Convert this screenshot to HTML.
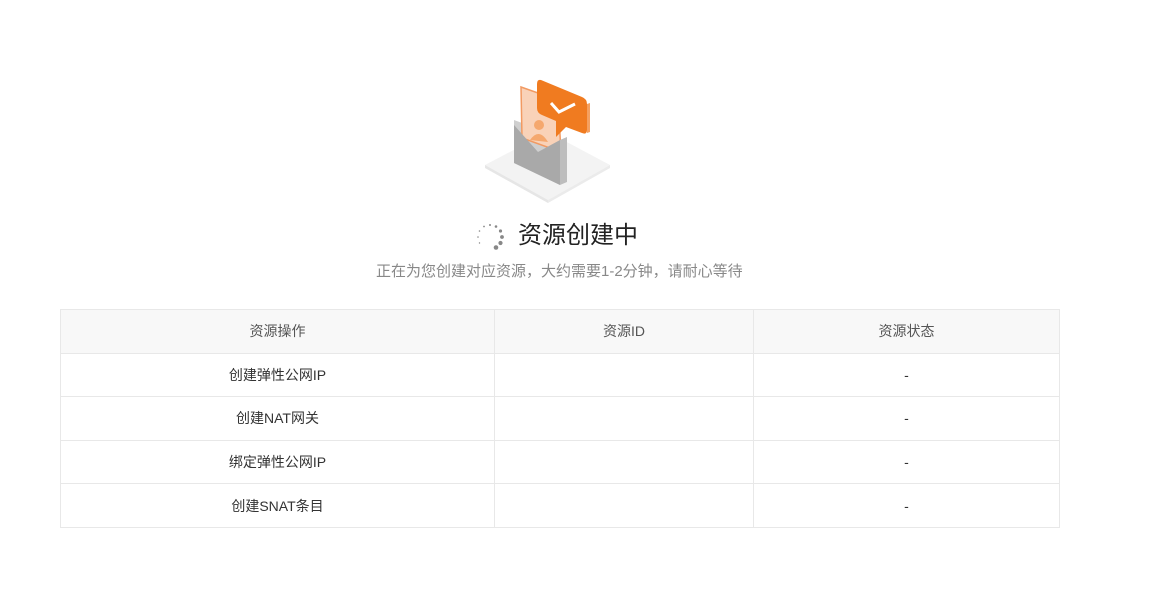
<!DOCTYPE html>
<html><head><meta charset="utf-8"><style>
*{margin:0;padding:0;box-sizing:border-box}
body{width:1167px;height:614px;background:#fff;font-family:"Liberation Sans","Noto Sans CJK SC",sans-serif;position:relative;overflow:hidden}
.title{position:absolute;top:219px;left:518px;font-size:24px;color:#222;line-height:34px;white-space:nowrap}
.sub{position:absolute;top:262px;left:376px;font-size:15px;color:#888;line-height:20px;white-space:nowrap}
table{position:absolute;left:60px;top:309px;width:1000px;border-collapse:collapse;font-size:14px;color:#333}
td,th{border:1px solid #e8e8e8;text-align:center;height:43.6px;font-weight:normal}
th{background:#f8f8f8;color:#555}
</style></head><body>
<svg style="position:absolute;left:470px;top:70px" width="160" height="140" viewBox="470 70 160 140">
<polygon points="485,165 548,132 610,165 548,200" fill="#f3f3f3"/>
<polygon points="485,165 548,200 548,203 485,168" fill="#e6e6e6"/>
<polygon points="548,200 610,165 610,168 548,203" fill="#ebebeb"/>
<polygon points="514,120 560,137 560,185 514,163" fill="#cfcfcf"/>
<polygon points="521,87 558,100 561,152 522,138" fill="#f9d2b8" stroke="#f29a62" stroke-width="1.5"/>
<circle cx="539" cy="125" r="5" fill="#f5a86e"/>
<path d="M530,140 q9,-13 18,2 z" fill="#f5a86e"/>
<polygon points="514,125 538,152 560,140 560,185 514,163" fill="#a9a9a9"/>
<polygon points="560,140 567,137 567,182 560,185" fill="#bdbdbd"/>
<path d="M541,80 L582,97 Q587,99 587,104 L587,130 Q587,135 582,133 L566,127 L556,137 L556,121 L542,115 Q537,113 537,108 L537,84 Q537,79 541,80 Z" fill="#f07b20"/>
<path d="M587,104 L590,103 L590,132 L587,133 Z" fill="#f5a060"/>
<polyline points="551,103 559,112 575,104" fill="none" stroke="#fff" stroke-width="3"/>
</svg>
<svg style="position:absolute;left:475px;top:222px" width="30" height="30" viewBox="0 0 30 30">
<g fill="#888">
<circle cx="15" cy="3" r="1"/><circle cx="21" cy="4.5" r="1.3"/><circle cx="25.5" cy="9" r="1.6"/><circle cx="27" cy="15" r="1.9"/><circle cx="25.5" cy="21" r="2.1"/><circle cx="21" cy="25.5" r="2.3"/><circle cx="9" cy="4.5" r="0.9"/><circle cx="4.5" cy="9" r="0.8"/><circle cx="3" cy="15" r="0.8"/><circle cx="4.5" cy="21" r="0.7"/>
</g></svg>
<div class="title">资源创建中</div>
<div class="sub">正在为您创建对应资源，大约需要1-2分钟，请耐心等待</div>
<table>
<tr><th style="width:434px">资源操作</th><th style="width:259px">资源ID</th><th>资源状态</th></tr>
<tr><td>创建弹性公网IP</td><td></td><td>-</td></tr>
<tr><td>创建NAT网关</td><td></td><td>-</td></tr>
<tr><td>绑定弹性公网IP</td><td></td><td>-</td></tr>
<tr><td>创建SNAT条目</td><td></td><td>-</td></tr>
</table>
</body></html>
